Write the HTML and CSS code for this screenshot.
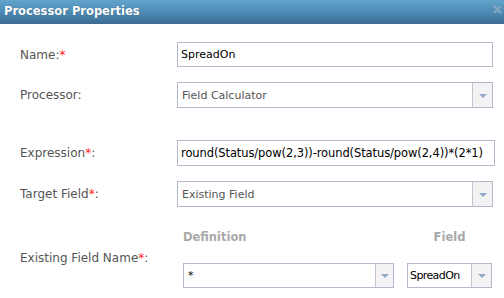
FILE: index.html
```html
<!DOCTYPE html>
<html>
<head>
<meta charset="utf-8">
<link rel="stylesheet" href="styles.css">
</head>
<body>
<div class="dialog">
  <div class="titlebar">
    <span class="title">Processor Properties</span>
    <svg class="close" width="9" height="9" viewBox="0 0 9 9"><path d="M1 1 L8 8 M8 1 L1 8" stroke="#86a5c2" stroke-width="2.2" fill="none"/></svg>
  </div>
  <div class="form">
    <div class="row row-name">
      <div class="label">Name:<span class="req">*</span></div>
      <div class="field text">SpreadOn</div>
    </div>
    <div class="row row-processor">
      <div class="label">Processor:</div>
      <div class="field combo"><span class="value">Field Calculator</span><span class="arrow"></span></div>
    </div>
    <div class="row row-expression">
      <div class="label">Expression<span class="req">*</span>:</div>
      <div class="field text wide">round(Status/pow(2,3))-round(Status/pow(2,4))*(2*1)</div>
    </div>
    <div class="row row-target">
      <div class="label">Target Field<span class="req">*</span>:</div>
      <div class="field combo"><span class="value">Existing Field</span><span class="arrow"></span></div>
    </div>
    <div class="row row-existing">
      <div class="label">Existing Field Name<span class="req">*</span>:</div>
      <div class="pair">
        <div class="col col-def">
          <div class="colhead">Definition</div>
          <div class="field combo small"><span class="value dark">*</span><span class="arrow narrow"></span></div>
        </div>
        <div class="col col-field">
          <div class="colhead center">Field</div>
          <div class="field combo small"><span class="value dark tight">SpreadOn</span><span class="arrow"></span></div>
        </div>
      </div>
    </div>
  </div>
</div>
</body>
</html>
```

FILE: styles.css
```css
html, body {
  margin: 0;
  padding: 0;
  background: #fff;
}
body {
  width: 504px;
  height: 298px;
  overflow: hidden;
  font-family: "DejaVu Sans", Verdana, sans-serif;
  font-size: 12px;
}
.titlebar {
  height: 24px;
  display: flex;
  align-items: center;
  justify-content: space-between;
  padding: 0 2px 0 4px;
  background: linear-gradient(to bottom, #62a3cc 0%, #4f8bb5 50%, #3c6b91 100%);
}
.title {
  color: #fff;
  font-weight: bold;
  font-size: 11.5px;
  text-shadow: 0 0 1px #2d5677;
  margin-top: -2px;
}
.close {
  display: block;
  margin-top: -6px;
}
.form {
  padding: 18px 0 0 20px;
}
.row {
  display: flex;
  align-items: center;
  height: 26px;
}
.label {
  width: 157px;
  flex: none;
  color: #555;
}
.req {
  color: #ff2222;
}
.row-name { height: 25px; }
.row-processor { margin-top: 15px; }
.row-expression { margin-top: 32px; }
.row-target { margin-top: 15px; }
.row-existing { margin-top: 20px; height: 61px; }
.field {
  box-sizing: border-box;
  border: 1px solid #b5b8c8;
  height: 26px;
  width: 316px;
  flex: none;
  background: #fff;
  display: flex;
  align-items: center;
  font-size: 11px;
}
.text {
  height: 25px;
  padding-left: 3px;
  color: #000;
  white-space: nowrap;
  overflow: hidden;
}
.wide {
  width: 318px;
  height: 26px;
  font-size: 11.5px;
  letter-spacing: -0.1px;
}
.combo .value {
  flex: 1;
  padding-left: 4px;
  color: #555;
  white-space: nowrap;
}
.combo .value.dark { color: #000; }
.combo .value.tight { padding-left: 2px; letter-spacing: -0.6px; }
.arrow {
  align-self: stretch;
  width: 19px;
  flex: none;
  border-left: 1px solid #c3c6d2;
  background: #f3f3f3;
  display: flex;
  align-items: center;
  justify-content: center;
}
.arrow.narrow { width: 17px; }
.arrow::after {
  content: "";
  width: 0;
  height: 0;
  border-left: 4px solid transparent;
  border-right: 4px solid transparent;
  border-top: 4px solid #93a9c9;
  margin-top: 1px;
}
.pair {
  display: flex;
  gap: 13px;
  padding-left: 6px;
  flex: none;
}
.col {
  display: flex;
  flex-direction: column;
  gap: 16px;
}
.col-def { width: 211px; }
.col-field { width: 85px; }
.colhead {
  height: 20px;
  line-height: 20px;
  font-weight: bold;
  font-size: 11.5px;
  color: #a8a8a8;
}
.colhead.center { text-align: center; }
.small {
  width: 100%;
  height: 25px;
}
```
